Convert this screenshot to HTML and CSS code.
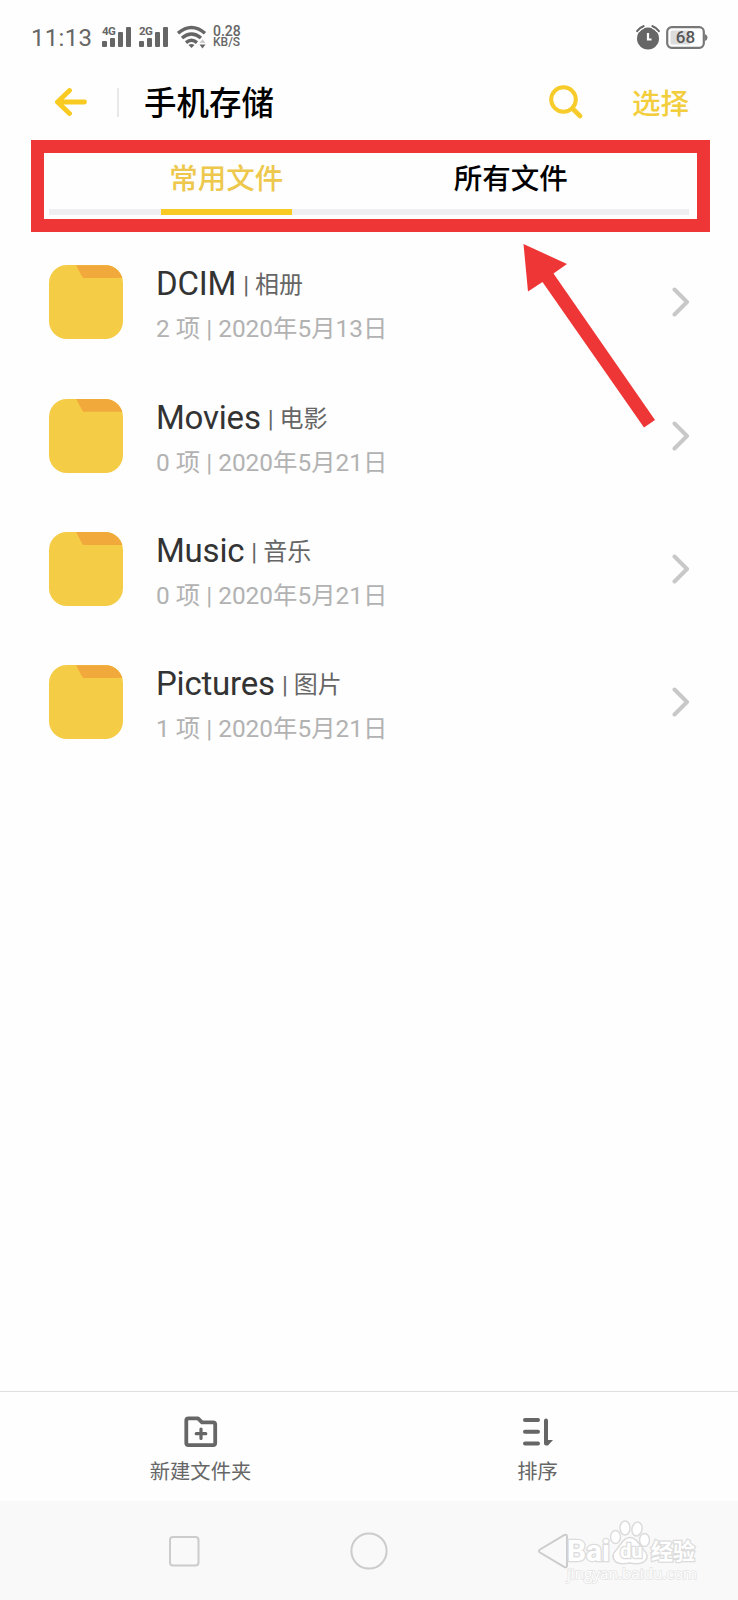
FILE: index.html
```html
<!DOCTYPE html>
<html lang="zh-CN">
<head>
    <meta charset="UTF-8">
    <meta name="viewport" content="width=device-width, initial-scale=1.0">
    <title>手机存储</title>
    <link rel="stylesheet" href="styles.css">
</head>
<body>
    <div class="phone">
        <div class="status-bar">
            <span class="time">11:13</span>
            <svg class="signal" width="30" height="22" viewBox="0 0 30 22">
                <text x="0" y="9">4G</text>
                <rect x="0" y="15" width="5" height="6" rx="1"/>
                <rect x="8" y="12" width="5" height="9" rx="1"/>
                <rect x="16" y="6" width="5" height="15" rx="1"/>
                <rect x="24" y="1" width="5" height="20" rx="1"/>
            </svg>
            <svg class="signal signal-2" width="30" height="22" viewBox="0 0 30 22">
                <text x="0" y="9">2G</text>
                <rect x="0" y="15" width="5" height="6" rx="1"/>
                <rect x="8" y="12" width="5" height="9" rx="1"/>
                <rect x="16" y="6" width="5" height="15" rx="1"/>
                <rect x="24" y="1" width="5" height="20" rx="1"/>
            </svg>
            <svg class="wifi" width="30" height="24" viewBox="0 0 30 24">
                <g fill="none" stroke="#666" stroke-width="3.400">
                    <path d="M1 8.200Q14.500-3.200 28 8.200"/>
                    <path d="M5 13Q14.500 5 24 13"/>
                    <path d="M9 17.600Q14.500 13 20 17.600"/>
                </g>
                <path d="M11.500 20Q14.500 18 17.500 20L14.500 23z" fill="#666"/>
                <path d="M22.500 19.500h6l-3 4z" fill="#666"/>
                <path d="M22.500 18h6l-3-4z" fill="#ccc"/>
            </svg>
            <div class="speed"><span>0.28</span><span>KB/S</span></div>
            <svg class="alarm" width="24" height="25" viewBox="0 0 24 25">
                <circle cx="12" cy="13.500" r="11" fill="#666"/>
                <path d="M1.200 6Q3.500 2.500 7.500 1.200M22.800 6Q20.500 2.500 16.500 1.200" fill="none" stroke="#fefefe" stroke-width="5"/>
                <path d="M1.200 6Q3.500 2.500 7.500 1.200M22.800 6Q20.500 2.500 16.500 1.200" fill="none" stroke="#666" stroke-width="2.200" stroke-linecap="round"/>
                <path d="M12 8v6.500h3.500" fill="none" stroke="#fff" stroke-width="2.200"/>
            </svg>
            <svg class="battery" width="42" height="23" viewBox="0 0 42 23">
                <rect x="1.200" y="1.200" width="36.600" height="20.600" rx="4.500" fill="#fff" stroke="#777" stroke-width="2.200"/>
                <rect x="4.500" y="4.500" width="20" height="14" rx="1.500" fill="#dcdcdc"/>
                <path d="M39 8q2.500 1 2.500 3.500T39 15z" fill="#777"/>
                <text x="19.500" y="17.300" text-anchor="middle">68</text>
            </svg>
        </div>

        <div class="header">
            <svg class="back" width="34" height="28" viewBox="0 0 34 28">
                <path d="M15.500 2.500L3.500 14l12 11.500M4 14h26.500" fill="none" stroke="#f9cb22" stroke-width="4.800" stroke-linecap="round" stroke-linejoin="round"/>
            </svg>
            <div class="divider"></div>
            <h1>手机存储</h1>
            <svg class="search" width="34" height="34" viewBox="0 0 34 34">
                <circle cx="14.500" cy="14.500" r="12.300" fill="none" stroke="#f7cb2a" stroke-width="4"/>
                <path d="M23.500 23.500l7.500 7.500" stroke="#f7cb2a" stroke-width="4.600" stroke-linecap="round"/>
            </svg>
            <span class="select">选择</span>
        </div>

        <div class="tabs">
            <div class="tab active">常用文件</div>
            <div class="tab">所有文件</div>
        </div>

        <div class="file-list">
            <div class="file-item">
                <div class="folder"></div>
                <div class="file-info">
                    <div class="file-name">DCIM<span>| 相册</span></div>
                    <div class="file-meta">2 项 | 2020年5月13日</div>
                </div>
                <svg class="chevron" width="18" height="30" viewBox="0 0 18 30"><path d="M2.500 2.500L15 15 2.500 27.500"/></svg>
            </div>
            <div class="file-item">
                <div class="folder"></div>
                <div class="file-info">
                    <div class="file-name">Movies<span>| 电影</span></div>
                    <div class="file-meta">0 项 | 2020年5月21日</div>
                </div>
                <svg class="chevron" width="18" height="30" viewBox="0 0 18 30"><path d="M2.500 2.500L15 15 2.500 27.500"/></svg>
            </div>
            <div class="file-item">
                <div class="folder"></div>
                <div class="file-info">
                    <div class="file-name">Music<span>| 音乐</span></div>
                    <div class="file-meta">0 项 | 2020年5月21日</div>
                </div>
                <svg class="chevron" width="18" height="30" viewBox="0 0 18 30"><path d="M2.500 2.500L15 15 2.500 27.500"/></svg>
            </div>
            <div class="file-item">
                <div class="folder"></div>
                <div class="file-info">
                    <div class="file-name">Pictures<span>| 图片</span></div>
                    <div class="file-meta">1 项 | 2020年5月21日</div>
                </div>
                <svg class="chevron" width="18" height="30" viewBox="0 0 18 30"><path d="M2.500 2.500L15 15 2.500 27.500"/></svg>
            </div>
        </div>

        <div class="toolbar">
            <div class="tool">
                <svg width="34" height="32" viewBox="0 0 34 32" fill="none" stroke="#666" stroke-linejoin="round">
                    <path d="M4.500 2.300h9.500l4 4H29q2.200 0 2.200 2.200v18.500q0 2.200-2.200 2.200H4.500q-2.200 0-2.200-2.200V4.500q0-2.200 2.200-2.200z" stroke-width="3.800"/>
                    <path d="M17 13v9.500M12.200 17.700h9.600" stroke-width="3.200" stroke-linecap="round"/>
                </svg>
                <span>新建文件夹</span>
            </div>
            <div class="tool">
                <svg width="32" height="32" viewBox="0 0 32 32">
                    <path d="M3 4h13M3 15.700h13M3 27.400h13" stroke="#666" stroke-width="4" stroke-linecap="round"/>
                    <path d="M22 4.500q0-2 2-2t2 2V24h5L26 29.500h-2Q22 29.500 22 27.500z" fill="#666"/>
                </svg>
                <span>排序</span>
            </div>
        </div>

        <div class="nav-bar">
            <svg width="38" height="38" viewBox="0 0 38 38"><rect x="5" y="5" width="28.500" height="28.500" rx="3"/></svg>
            <svg width="38" height="38" viewBox="0 0 38 38"><circle cx="19" cy="19" r="17.600"/></svg>
            <svg width="38" height="38" viewBox="0 0 38 38"><path d="M5 17.500L29.500 3q2.500-1.200 2.500 1.500v29q0 2.500-2.500 1.500L5 20.500q-2-1.500 0-3z"/></svg>
        </div>

        <!-- 标注 -->
        <div class="mark-box"></div>
        <svg class="mark-arrow" width="132" height="186" viewBox="0 0 132 186">
            <path d="M.5 1L44 21 30.500 30.500 132 177l-11 7.500L19.500 39 5 48.500z" fill="#ef3636"/>
        </svg>

        <!-- 水印 -->
        <svg class="watermark" width="144" height="72" viewBox="0 0 144 72">
            <g fill="#fff" stroke="#dcdcdc" stroke-width="1.500">
                <text class="wm-logo" x="4" y="43" textLength="43" lengthAdjust="spacingAndGlyphs">Bai</text>
                <ellipse cx="52.500" cy="19" rx="5" ry="6.500"/>
                <ellipse cx="62" cy="10" rx="5" ry="7"/>
                <ellipse cx="74" cy="11" rx="5" ry="7" transform="rotate(12 74 11)"/>
                <ellipse cx="81.500" cy="22" rx="5" ry="6.500"/>
                <path d="M60 23q7-7 14 0l6 8q7 7 2 12-4 4-15 2-12 2-15-2-5-5 2-12z"/>
                <text class="wm-du" x="57" y="40">du</text>
                <text class="wm-cn" x="88" y="41">经验</text>
            </g>
            <text class="wm-url" x="4" y="61" textLength="130" lengthAdjust="spacingAndGlyphs">jingyan.baidu.com</text>
        </svg>
    </div>
</body>
</html>
```

FILE: styles.css
```css
body {
    margin: 0;
    padding: 0;
    font-family: Roboto, "Noto Sans CJK SC", sans-serif;
    background-color: #fff;
    color: #333;
}
svg {
    display: block;
    flex-shrink: 0;
}
.phone {
    position: relative;
    width: 738px;
    height: 1600px;
    overflow: hidden;
    background-color: #fefefe;
    display: flex;
    flex-direction: column;
}

/* 状态栏 */
.status-bar {
    height: 76px;
    box-sizing: border-box;
    padding: 0 30px 2px 31px;
    display: flex;
    align-items: center;
    color: #666;
}
.time {
    width: 71px;
    font-size: 24px;
    letter-spacing: 0.3px;
    padding-top: 2px;
}
.signal {
    fill: #666;
    font-size: 11.5px;
    font-weight: 700;
    letter-spacing: -0.5px;
    overflow: visible;
}
.signal-2 {
    margin-left: 7px;
}
.wifi {
    margin-left: 8px;
}
.speed {
    margin-left: 6px;
    display: flex;
    flex-direction: column;
    font-size: 14px;
    line-height: 11px;
    font-weight: 500;
}
.speed span:last-child {
    font-size: 12px;
}
.alarm {
    margin-left: auto;
}
.battery {
    margin-left: 6px;
    fill: #555;
    font-size: 17px;
    font-weight: 500;
}

/* 标题栏 */
.header {
    height: 64px;
    box-sizing: border-box;
    padding: 0 49px 12px 54px;
    display: flex;
    align-items: center;
}
.divider {
    width: 2px;
    height: 29px;
    margin: 0 25px 0 29px;
    background-color: #e8e8e8;
}
h1 {
    margin: 0;
    padding-top: 4px;
    font-size: 32.5px;
    line-height: 40px;
    font-weight: 500;
    color: #000;
}
.search {
    margin-left: auto;
    margin-right: 49px;
}
.select {
    padding-top: 5px;
    font-size: 28.5px;
    line-height: 40px;
    font-weight: 500;
    color: #f2cd3c;
}

/* 标签 */
.tabs {
    margin: 13px 49px 0;
    height: 56px;
    padding: 0 36px 0 35px;
    border-bottom: 6px solid #efeff1;
    display: flex;
    justify-content: space-around;
}
.tab {
    width: 131px;
    height: 62px;
    box-sizing: border-box;
    font-size: 28.5px;
    line-height: 53px;
    font-weight: 500;
    text-align: center;
    color: #000;
}
.tab.active {
    color: #edc84c;
    border-bottom: 6px solid #f9cb22;
}

/* 文件列表 */
.file-list {
    flex: 1;
    padding-top: 20.7px;
}
.file-item {
    height: 133.3px;
    padding: 0 48px 0 49px;
    display: flex;
    align-items: center;
}
.folder {
    width: 74px;
    height: 74px;
    border-radius: 18px;
    background-color: #f5cc46;
    overflow: hidden;
}
.folder::before {
    content: "";
    display: block;
    height: 13px;
    margin-left: 27px;
    background-color: #f2a93b;
    clip-path: polygon(0 0, 100% 0, 100% 100%, 7px 100%);
}
.file-info {
    flex: 1;
    margin-left: 33px;
    padding-top: 9px;
}
.file-name {
    height: 44px;
    font-size: 33px;
    line-height: 40px;
    letter-spacing: -0.2px;
}
.file-name span {
    margin-left: 7px;
    font-size: 24px;
    line-height: 1;
    letter-spacing: 0;
    vertical-align: 2px;
    color: #666;
}
.file-meta {
    font-size: 24.4px;
    line-height: 41px;
    color: #b2b2b2;
}
.chevron path {
    fill: none;
    stroke: #c8c8c8;
    stroke-width: 4;
    stroke-linecap: round;
    stroke-linejoin: round;
}

/* 底部工具栏 */
.toolbar {
    height: 109px;
    padding: 0 32px;
    border-top: 1px solid #dfdfdf;
    display: flex;
}
.tool {
    flex: 1;
    padding-top: 24px;
    display: flex;
    flex-direction: column;
    align-items: center;
}
.tool span {
    margin-top: 9px;
    font-size: 20.3px;
    line-height: 30px;
    color: #666;
}
.nav-bar {
    height: 99px;
    padding: 0 165px;
    background-color: #f9f9f9;
    display: flex;
    justify-content: space-between;
    align-items: center;
}
.nav-bar svg {
    fill: none;
    stroke: #ccc;
    stroke-width: 2;
}

/* 标注与水印 */
.mark-box {
    position: absolute;
    left: 31px;
    top: 140px;
    width: 679px;
    height: 92px;
    box-sizing: border-box;
    border: 13px solid #ef3636;
}
.mark-arrow {
    position: absolute;
    left: 523px;
    top: 243px;
}
.watermark {
    position: absolute;
    left: 563px;
    top: 1518px;
}
.watermark text {
    font-weight: 700;
    paint-order: stroke;
    stroke-width: 2.5px;
}
.watermark .wm-logo {
    font-size: 29px;
}
.watermark .wm-du {
    font-size: 20px;
}
.watermark .wm-cn {
    font-size: 22px;
}
.watermark .wm-url {
    font-family: "Open Sans", sans-serif;
    font-size: 15px;
    font-weight: 400;
    fill: #fff;
    stroke: #e4e4e4;
    stroke-width: 1.5px;
}
```
